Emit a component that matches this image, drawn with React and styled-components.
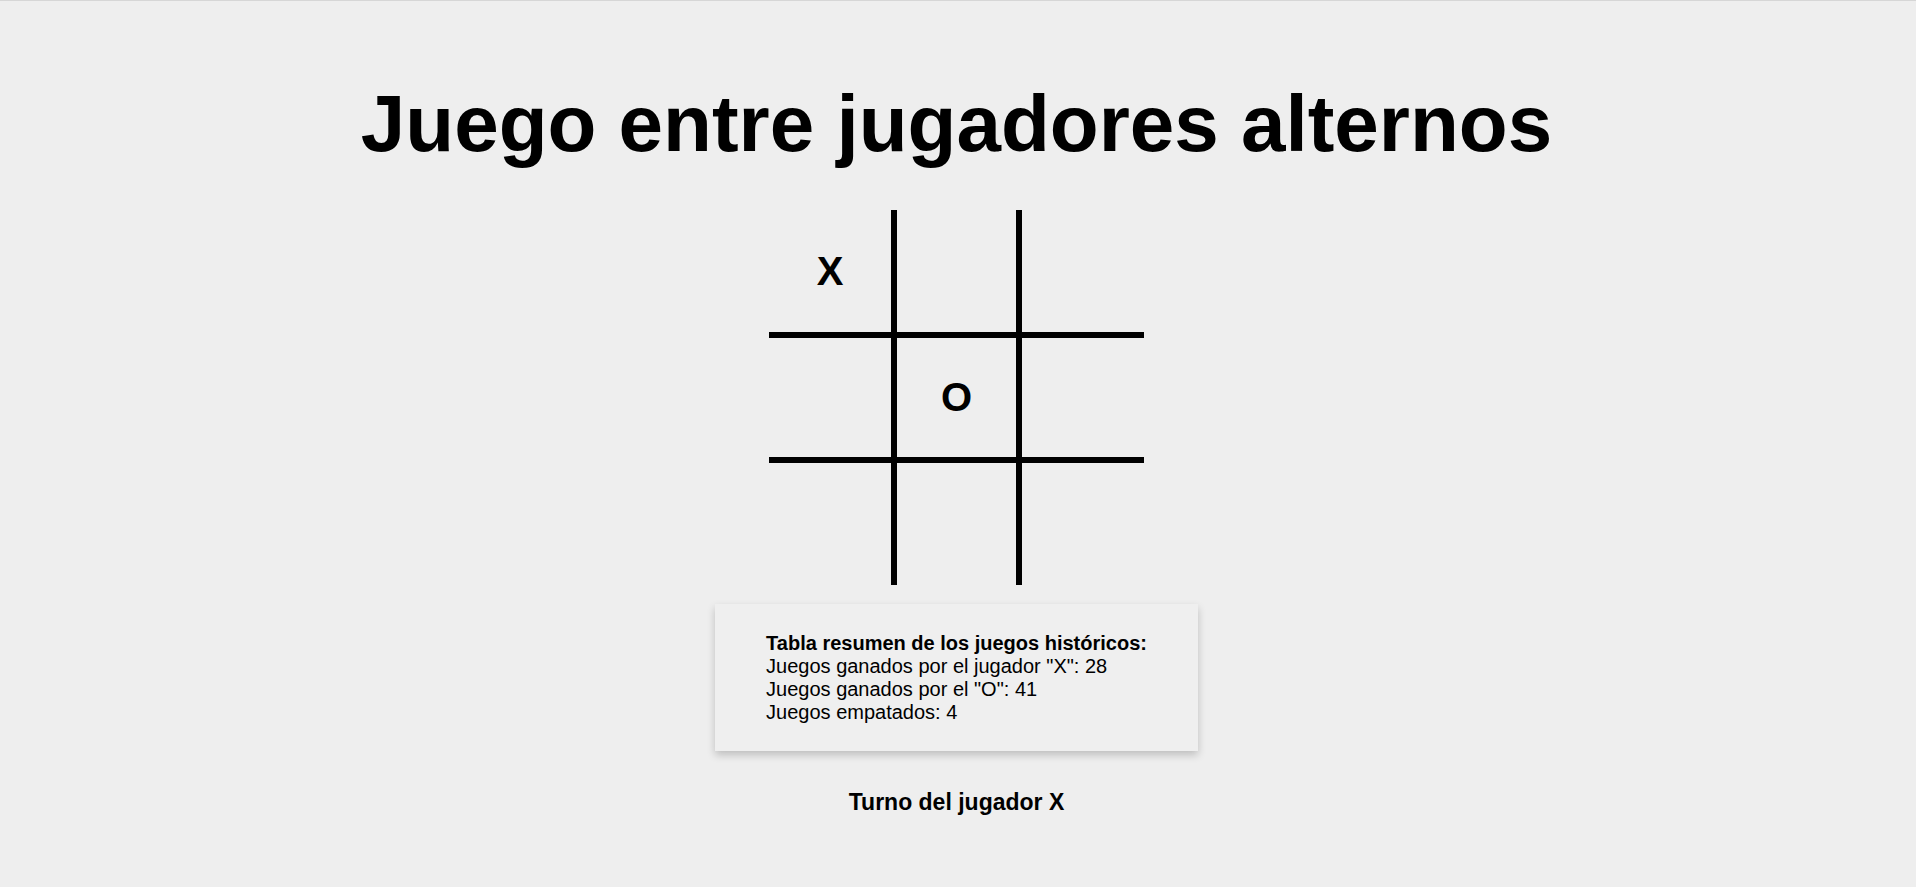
// External Dependencies
import React from 'react';
import styled, { createGlobalStyle } from 'styled-components';


// Global Styles
const GlobalStyle = createGlobalStyle`
    html, body {
        margin: 0;
        padding: 0;
        background: #eeeeee;
        font-family: "Liberation Sans", Arial, sans-serif;
        color: #000;
    }
`

// Styled Components
const Page = styled.div`
    min-height: 886px;
    border-top: 1px solid #d6d6d6;
    display: flex;
    flex-direction: column;
    align-items: center;
    padding-right: 3px;
`

const Title = styled.h1`
    margin: 77px 0 40px;
    font-size: 80px;
    font-weight: 700;
    line-height: normal;
`

const Board = styled.div`
    display: grid;
    grid-template-columns: repeat(3, 125px);
    grid-template-rows: repeat(3, 125px);
`

const Cell = styled.div`
    box-sizing: border-box;
    display: flex;
    align-items: center;
    justify-content: center;
    font-size: 40px;
    font-weight: 700;
    border-style: solid;
    border-color: #000;
    border-width: ${(props) => `${props.row > 0 ? 3 : 0}px ${props.col < 2 ? 3 : 0}px ${props.row < 2 ? 3 : 0}px ${props.col > 0 ? 3 : 0}px`};
`

const Summary = styled.div`
    margin-top: 19px;
    padding: 28px 51px 27px;
    background: #efefef;
    box-shadow: 0 4px 8px 0 rgba(0, 0, 0, 0.2);
    font-size: 20px;
    line-height: 23px;
`

const SummaryTitle = styled.div`
    font-weight: 700;
`

const Turn = styled.p`
    margin: 38px 0 0;
    font-size: 23px;
    font-weight: 700;
`


// Component Definition
const board = ['X', '', '', '', 'O', '', '', '', ''];

const App = () => {
    return (
        <Page>
            <GlobalStyle />
            <Title>Juego entre jugadores alternos</Title>
            <Board>
                {board.map((value, i) => (
                    <Cell key={i} row={Math.floor(i / 3)} col={i % 3}>{value}</Cell>
                ))}
            </Board>
            <Summary>
                <SummaryTitle>Tabla resumen de los juegos históricos:</SummaryTitle>
                <div>Juegos ganados por el jugador "X": 28</div>
                <div>Juegos ganados por el "O": 41</div>
                <div>Juegos empatados: 4</div>
            </Summary>
            <Turn>Turno del jugador X</Turn>
        </Page>
    )
}

export default App;
